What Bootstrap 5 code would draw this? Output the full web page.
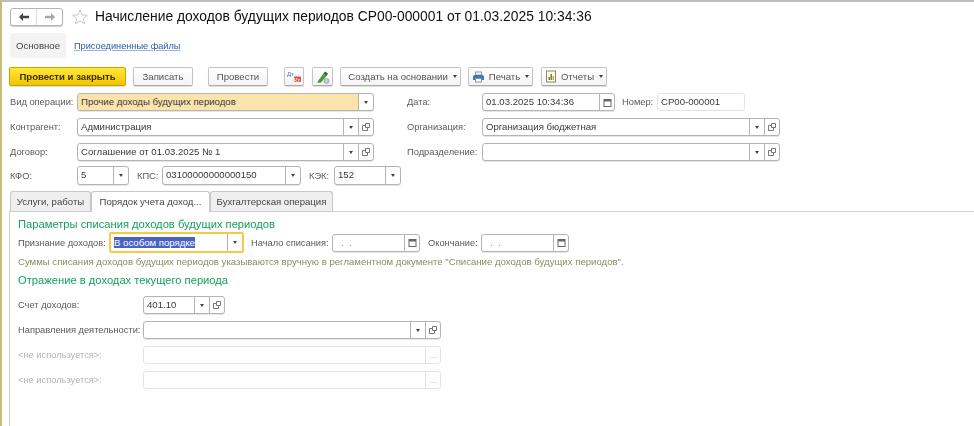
<!DOCTYPE html>
<html lang="ru">
<head>
<meta charset="utf-8">
<title>Начисление доходов</title>
<link rel="stylesheet" href="https://cdn.jsdelivr.net/npm/bootstrap@5.3.0/dist/css/bootstrap.min.css">
<style>
html,body{height:100%;}
body{font-family:"Liberation Sans",Arial,sans-serif;font-size:9.6px;line-height:12px;color:#4a4a4a;background:#fff;overflow:hidden;}
.sheet{height:426px;border-top:2px solid #bdbdbd;border-left:2px solid #c9bb7c;position:relative;filter:blur(.3px);}
.head-row{height:19px;margin:5px 0 0 8px;}
.navpair{width:53px;height:18px;border:1px solid #b5b5b5;border-radius:3px;box-shadow:0 1px 1px #ccc;}
.navpair>span{flex:1;}
.navpair>span+span{border-left:1px solid #ddd;}
.star-ic{margin-left:9px;margin-right:7px;}
.doc-title{font-size:13.85px;line-height:19px;color:#111;white-space:nowrap;}
.sec-row{height:25px;margin:7px 0 0 8px;}
.sec-on{width:56px;background:#f3f3f3;border-radius:3px;color:#444;}
.sec-link{margin-left:8px;font-size:9.2px;color:#2a5aa8;text-decoration:underline;text-decoration-color:#9db4d8;}
.tool-row{height:19px;margin:9px 0 0 7px;}
.tb{height:19px;border:1px solid #c4c4c4;border-bottom-color:#aaa;border-radius:2px;background:linear-gradient(#fff,#f3f3f3);box-shadow:0 1px 1px #ddd;color:#555;white-space:nowrap;flex:none;}
.tb-main{width:117px;background:linear-gradient(#ffe83a,#f2c500);border-color:#c9a400;color:#3a3000;font-weight:700;}
.tb-zap{width:60px;margin-left:7px;}
.tb-prov{width:60px;margin-left:15px;}
.tb-i1{width:20px;margin-left:16px;}
.tb-i2{width:21px;margin-left:8px;}
.tb-cr{width:121px;margin-left:7px;padding-left:4px;}
.tb-pr{width:65px;margin-left:7px;}
.tb-ot{width:66px;margin-left:8px;}
.caret-s{width:0;height:0;border-left:2.5px solid transparent;border-right:2.5px solid transparent;border-top:3px solid #444;display:inline-block;flex:none;}
.tb .caret-s{margin-left:5px;}
.f-row{height:18px;margin-left:8px;flex:none;}
.r1,.r2,.r3{margin-top:7px;}.r4{margin-top:5px;height:19px;}
.lab{flex:none;white-space:nowrap;color:#5a5a5a;font-size:9.3px;}
.fld{flex:none;height:18px;border:1px solid #b4b4b4;border-radius:3px;background:#fff;color:#3a3a3a;box-shadow:0 1px 0 #e6e6e6;overflow:hidden;}
.r4 .fld{height:19px;}
.fld-t{flex:1;padding-left:3px;white-space:nowrap;line-height:16px;min-width:0;}
.fld-b{flex:none;width:15px;border-left:1px solid #b4b4b4;}
.fill-hi{background:#fbe3ac;}
.l-a{width:67px;}.f-a{width:297px;}
.l-b{width:75px;margin-left:33px;}.f-b{width:133px;}
.l-c{width:35px;margin-left:7px;}.f-c{width:88px;}
.f-d{width:298px;}
.l-e{width:25px;margin-left:8px;}.f-e{width:139px;}
.f-k{width:52px;}
.l-f{width:25px;margin-left:8px;}.f-f{width:67px;}
.tab-row{height:20px;margin:6px 0 0 8px;position:relative;z-index:1;}
.ptab{flex:none;height:20px;border:1px solid #c8c8c8;border-bottom:0;border-radius:3px 3px 0 0;background:#efefef;color:#444;white-space:nowrap;}
.pt1{width:81px;}.pt2{width:119px;background:#fff;height:21px;}.pt3{width:123px;}
.panel{border-top:1px solid #cfcfcf;border-left:1px solid #cfcfcf;margin-left:7px;height:220px;padding-left:8px;}
.sub{font-size:11.2px;line-height:14px;color:#12a05c;white-space:nowrap;}
.sub1{margin-top:5px;}
.p-row{flex:none;}
.pr1{height:21px;margin-top:1px;}
.l-p{width:91px;}
.f-p{width:135px;height:21px;border:2px solid #f7c948;border-radius:2px;box-shadow:none;}
.f-p .fld-t{line-height:17px;padding-left:3px;}
.sel-txt{background:#4a62c4;color:#fff;}
.l-q{width:81px;margin-left:7px;}.f-q{width:88px;}
.l-r{width:53px;margin-left:8px;}
.dots{color:#888;}
.note{color:#8c8c5c;white-space:nowrap;margin-top:3px;height:12px;}
.sub2{margin-top:5px;}
.pr2{height:18px;margin-top:9px;}.pr3,.pr4,.pr5{height:18px;margin-top:7px;}
.l-s{width:125px;}.f-s{width:82px;}.f-t{width:298px;}
.off{border-color:#e3e3e3;box-shadow:none;}
.off .fld-b{border-left-color:#e3e3e3;color:#bbb;font-size:9px;}
.lab-off{color:#b5b5b5;}
svg{display:block;flex:none;}
.dk{font-size:6px;font-family:"Liberation Sans",Arial,sans-serif;}
</style>
</head>
<body>
<div class="sheet">
  <div class="head-row d-flex align-items-center">
    <div class="navpair d-flex bg-white">
      <span class="d-flex align-items-center justify-content-center"><svg width="12" height="10" viewBox="0 0 12 10"><path d="M1 5l4-4v2.700h6v2.600H5V9z" fill="#444"/></svg></span>
      <span class="d-flex align-items-center justify-content-center"><svg width="12" height="10" viewBox="0 0 12 10"><path d="M11 5L7 1v2.700H1v2.600h6V9z" fill="#a8a8a8"/></svg></span>
    </div>
    <svg class="star-ic" width="16" height="16" viewBox="0 0 16 16"><path d="M8 1l2.100 4.800 5.200.5-3.900 3.400 1.200 5.100L8 12.100l-4.600 2.700 1.200-5.100L.7 6.300l5.200-.5z" fill="#fff" stroke="#c4c4c4"/></svg>
    <div class="doc-title">Начисление доходов будущих периодов СР00-000001 от 01.03.2025 10:34:36</div>
  </div>
  <div class="sec-row d-flex align-items-center">
    <div class="sec-on h-100 d-flex align-items-center justify-content-center">Основное</div>
    <a class="sec-link" href="#">Присоединенные файлы</a>
  </div>
  <div class="tool-row d-flex">
    <div class="tb tb-main d-flex align-items-center justify-content-center">Провести и закрыть</div>
    <div class="tb tb-zap d-flex align-items-center justify-content-center">Записать</div>
    <div class="tb tb-prov d-flex align-items-center justify-content-center">Провести</div>
    <div class="tb tb-i1 d-flex align-items-center justify-content-center"><svg width="14" height="13" viewBox="0 0 14 13"><text class="dk" x="0" y="6" fill="#3f73b5">Дт</text><rect x="7" y="6.500" width="7" height="5.500" fill="#e0564c"/><text class="dk" x="7" y="11.500" fill="#fff">Кт</text></svg></div>
    <div class="tb tb-i2 d-flex align-items-center justify-content-center"><svg width="14" height="14" viewBox="0 0 14 14"><path d="M2 11L7.500 3.500l3 2.500L5 12.500 1.500 13z" fill="#4f9a3c"/><path d="M7.500 3.500L9 1.500l3 2-1.500 2.500z" fill="#2d6a25"/><circle cx="10.500" cy="11" r="2.500" fill="#c3ccd3" stroke="#8fa0ad" stroke-width=".8"/></svg></div>
    <div class="tb tb-cr d-flex align-items-center justify-content-center">Создать на основании<i class="caret-s"></i></div>
    <div class="tb tb-pr d-flex align-items-center justify-content-center"><svg class="me-1" width="13" height="12" viewBox="0 0 13 12"><rect x="3.500" y="1" width="6" height="3" fill="#fff" stroke="#7e98b5"/><path d="M1 6a2 2 0 0 1 2-2h7a2 2 0 0 1 2 2v3H1z" fill="#3f78ad"/><rect x="3.500" y="7.500" width="6" height="3.500" fill="#fff" stroke="#7e98b5"/></svg>Печать<i class="caret-s"></i></div>
    <div class="tb tb-ot d-flex align-items-center justify-content-center"><svg class="me-1" width="12" height="13" viewBox="0 0 12 13"><rect x="1.500" y="1" width="9" height="11" fill="#fffbe8" stroke="#8a8a60"/><rect x="3.500" y="7" width="1.500" height="3" fill="#d04a3a"/><rect x="5.500" y="4" width="1.500" height="6" fill="#3f9a4a"/><rect x="7.500" y="6" width="1.500" height="4" fill="#e0a030"/></svg>Отчеты<i class="caret-s"></i></div>
  </div>

  <div class="f-row r1 d-flex align-items-center">
    <div class="lab l-a">Вид операции:</div>
    <div class="fld f-a d-flex"><div class="fld-t fill-hi">Прочие доходы будущих периодов</div><div class="fld-b d-flex align-items-center justify-content-center"><i class="caret-s"></i></div></div>
    <div class="lab l-b">Дата:</div>
    <div class="fld f-b d-flex"><div class="fld-t">01.03.2025 10:34:36</div><div class="fld-b d-flex align-items-center justify-content-center"><svg width="9" height="9" viewBox="0 0 9 9"><rect x="1" y="1.500" width="7" height="7" fill="#fff" stroke="#666"/><rect x="1" y="1" width="7" height="2.500" fill="#666"/></svg></div></div>
    <div class="lab l-c">Номер:</div>
    <div class="fld f-c off d-flex"><div class="fld-t">СР00-000001</div></div>
  </div>
  <div class="f-row r2 d-flex align-items-center">
    <div class="lab l-a">Контрагент:</div>
    <div class="fld f-a d-flex"><div class="fld-t">Администрация</div><div class="fld-b d-flex align-items-center justify-content-center"><i class="caret-s"></i></div><div class="fld-b d-flex align-items-center justify-content-center"><svg width="8" height="8" viewBox="0 0 8 8"><path d="M3.500.5h4v4h-4zM3.500 2.500h-3v5h5v-3" fill="none" stroke="#777"/></svg></div></div>
    <div class="lab l-b">Организация:</div>
    <div class="fld f-d d-flex"><div class="fld-t">Организация бюджетная</div><div class="fld-b d-flex align-items-center justify-content-center"><i class="caret-s"></i></div><div class="fld-b d-flex align-items-center justify-content-center"><svg width="8" height="8" viewBox="0 0 8 8"><path d="M3.500.5h4v4h-4zM3.500 2.500h-3v5h5v-3" fill="none" stroke="#777"/></svg></div></div>
  </div>
  <div class="f-row r3 d-flex align-items-center">
    <div class="lab l-a">Договор:</div>
    <div class="fld f-a d-flex"><div class="fld-t">Соглашение от 01.03.2025 № 1</div><div class="fld-b d-flex align-items-center justify-content-center"><i class="caret-s"></i></div><div class="fld-b d-flex align-items-center justify-content-center"><svg width="8" height="8" viewBox="0 0 8 8"><path d="M3.500.5h4v4h-4zM3.500 2.500h-3v5h5v-3" fill="none" stroke="#777"/></svg></div></div>
    <div class="lab l-b">Подразделение:</div>
    <div class="fld f-d d-flex"><div class="fld-t"></div><div class="fld-b d-flex align-items-center justify-content-center"><i class="caret-s"></i></div><div class="fld-b d-flex align-items-center justify-content-center"><svg width="8" height="8" viewBox="0 0 8 8"><path d="M3.500.5h4v4h-4zM3.500 2.500h-3v5h5v-3" fill="none" stroke="#777"/></svg></div></div>
  </div>
  <div class="f-row r4 d-flex align-items-center">
    <div class="lab l-a">КФО:</div>
    <div class="fld f-k d-flex"><div class="fld-t">5</div><div class="fld-b d-flex align-items-center justify-content-center"><i class="caret-s"></i></div></div>
    <div class="lab l-e">КПС:</div>
    <div class="fld f-e d-flex"><div class="fld-t">03100000000000150</div><div class="fld-b d-flex align-items-center justify-content-center"><i class="caret-s"></i></div></div>
    <div class="lab l-f">КЭК:</div>
    <div class="fld f-f d-flex"><div class="fld-t">152</div><div class="fld-b d-flex align-items-center justify-content-center"><i class="caret-s"></i></div></div>
  </div>

  <div class="tab-row d-flex">
    <div class="ptab pt1 d-flex align-items-center justify-content-center">Услуги, работы</div>
    <div class="ptab pt2 d-flex align-items-center justify-content-center">Порядок учета доход...</div>
    <div class="ptab pt3 d-flex align-items-center justify-content-center">Бухгалтерская операция</div>
  </div>
  <div class="panel">
    <div class="sub sub1">Параметры списания доходов будущих периодов</div>
    <div class="p-row pr1 d-flex align-items-center">
      <div class="lab l-p">Признание доходов:</div>
      <div class="fld f-p d-flex"><div class="fld-t"><span class="sel-txt">В особом порядке</span></div><div class="fld-b d-flex align-items-center justify-content-center"><i class="caret-s"></i></div></div>
      <div class="lab l-q">Начало списания:</div>
      <div class="fld f-q d-flex"><div class="fld-t dots">&nbsp;&nbsp;.&nbsp;&nbsp;.</div><div class="fld-b d-flex align-items-center justify-content-center"><svg width="9" height="9" viewBox="0 0 9 9"><rect x="1" y="1.500" width="7" height="7" fill="#fff" stroke="#666"/><rect x="1" y="1" width="7" height="2.500" fill="#666"/></svg></div></div>
      <div class="lab l-r">Окончание:</div>
      <div class="fld f-q d-flex"><div class="fld-t dots">&nbsp;&nbsp;.&nbsp;&nbsp;.</div><div class="fld-b d-flex align-items-center justify-content-center"><svg width="9" height="9" viewBox="0 0 9 9"><rect x="1" y="1.500" width="7" height="7" fill="#fff" stroke="#666"/><rect x="1" y="1" width="7" height="2.500" fill="#666"/></svg></div></div>
    </div>
    <div class="note">Суммы списания доходов будущих периодов указываются вручную в регламентном документе "Списание доходов будущих периодов".</div>
    <div class="sub sub2">Отражение в доходах текущего периода</div>
    <div class="p-row pr2 d-flex align-items-center">
      <div class="lab l-s">Счет доходов:</div>
      <div class="fld f-s d-flex"><div class="fld-t">401.10</div><div class="fld-b d-flex align-items-center justify-content-center"><i class="caret-s"></i></div><div class="fld-b d-flex align-items-center justify-content-center"><svg width="8" height="8" viewBox="0 0 8 8"><path d="M3.500.5h4v4h-4zM3.500 2.500h-3v5h5v-3" fill="none" stroke="#777"/></svg></div></div>
    </div>
    <div class="p-row pr3 d-flex align-items-center">
      <div class="lab l-s">Направления деятельности:</div>
      <div class="fld f-t d-flex"><div class="fld-t"></div><div class="fld-b d-flex align-items-center justify-content-center"><i class="caret-s"></i></div><div class="fld-b d-flex align-items-center justify-content-center"><svg width="8" height="8" viewBox="0 0 8 8"><path d="M3.500.5h4v4h-4zM3.500 2.500h-3v5h5v-3" fill="none" stroke="#777"/></svg></div></div>
    </div>
    <div class="p-row pr4 d-flex align-items-center">
      <div class="lab lab-off l-s">&lt;не используется&gt;:</div>
      <div class="fld f-t off d-flex"><div class="fld-t"></div><div class="fld-b d-flex align-items-center justify-content-center">...</div></div>
    </div>
    <div class="p-row pr5 d-flex align-items-center">
      <div class="lab lab-off l-s">&lt;не используется&gt;:</div>
      <div class="fld f-t off d-flex"><div class="fld-t"></div><div class="fld-b d-flex align-items-center justify-content-center">...</div></div>
    </div>
  </div>
</div>
<script src="https://cdn.jsdelivr.net/npm/bootstrap@5.3.0/dist/js/bootstrap.bundle.min.js"></script>
</body>
</html>
